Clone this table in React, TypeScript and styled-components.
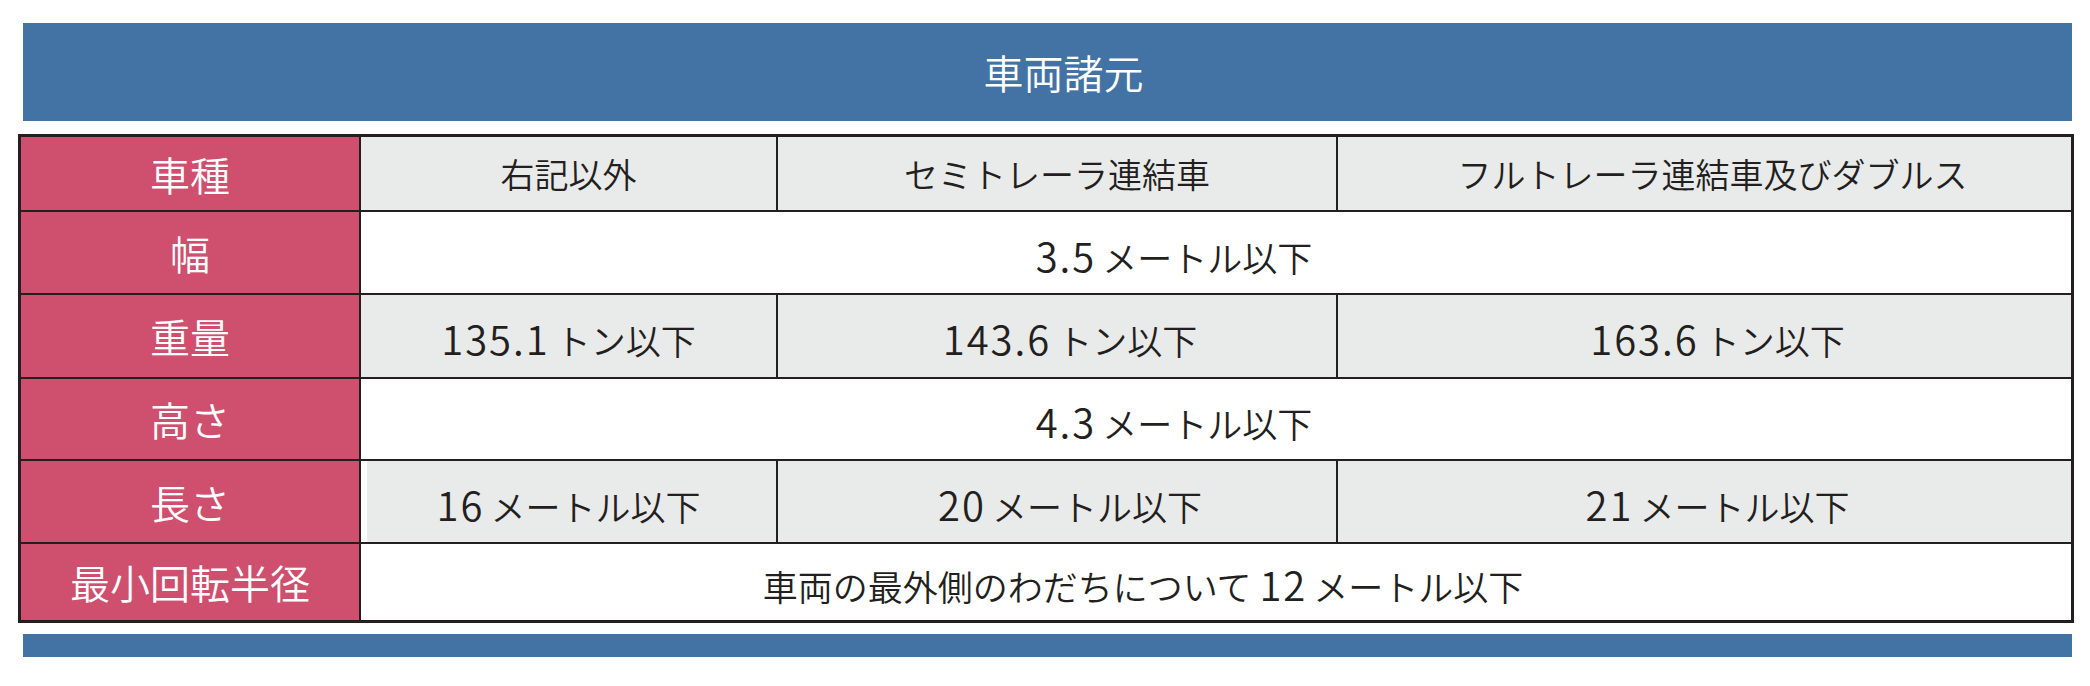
import styled, { createGlobalStyle } from "styled-components"
import { Fragment } from "react"

const GlobalStyle = createGlobalStyle`
    html, body{
        margin: 0;
        padding: 0;
        background: #ffffff;
    }
    body{
        font-family: "Noto Sans CJK JP", "Noto Sans", sans-serif;
        font-weight: 350;
        color: #231f20;
    }
`

const Page = styled.div`
    width: 2056px;
    padding: 23px 0 0 18px;
    display: flex;
    flex-direction: column;
`

const TitleBar = styled.div`
    margin: 0 2px 0 5px;
    padding-left: 32px;
    height: 98px;
    background: #4372a5;
    color: #ffffff;
    font-size: 40px;
    display: flex;
    align-items: center;
    justify-content: center;
`

const FootBar = styled.div`
    margin: 11px 2px 0 5px;
    height: 23px;
    background: #4372a5;
`

const Grid = styled.div`
    margin-top: 13px;
    display: grid;
    grid-template-columns: 338px 415px 558px 733px;
    grid-template-rows: 73px 81px 82px 80px 81px 76px;
    gap: 2px;
    background: #231f20;
    border: 3px solid #231f20;
`

const LabelCell = styled.div`
    background: #cf4f6e;
    color: #ffffff;
    font-size: 40px;
    display: flex;
    align-items: center;
    justify-content: center;
`

const HeadCell = styled.div<{ $nudge?: number }>`
    background: #e9eaea;
    font-size: 34px;
    padding-left: ${p => p.$nudge ?? 0}px;
    display: flex;
    align-items: center;
    justify-content: center;
`

type Tone = "grey" | "white"

const ValueCell = styled.div<{ $span?: number; $tone: Tone; $shift?: number; $nudge?: number; $inset?: number }>`
    grid-column: span ${p => p.$span ?? 1};
    background: ${p => (p.$tone === "grey" ? "#e9eaea" : "#ffffff")};
    box-shadow: ${p => (p.$inset ? `inset ${p.$inset}px 0 0 #ffffff` : "none")};
    font-size: 35px;
    padding: 4px ${p => p.$shift ?? 0}px 0 ${p => p.$nudge ?? 0}px;
    display: flex;
    align-items: center;
    justify-content: center;
    white-space: nowrap;
`

// digits in the source are set taller and wider than the kana around them
const Num = styled.span`
    font-size: 40px;
    letter-spacing: 2px;
    margin-right: 6px;
`

const columns = ["右記以外", "セミトレーラ連結車", "フルトレーラ連結車及びダブルス"]

interface Value {
    pre?: string
    num: string
    unit: string
}

interface SpecRow {
    label: string
    values: Value[]
    shift?: number
    inset?: number
}

const rows: SpecRow[] = [
    { label: "幅", values: [{ num: "3.5", unit: "メートル以下" }], shift: 84 },
    {
        label: "重量",
        values: [
            { num: "135.1", unit: "トン以下" },
            { num: "143.6", unit: "トン以下" },
            { num: "163.6", unit: "トン以下" },
        ],
    },
    { label: "高さ", values: [{ num: "4.3", unit: "メートル以下" }], shift: 84 },
    {
        label: "長さ",
        values: [
            { num: "16", unit: "メートル以下" },
            { num: "20", unit: "メートル以下" },
            { num: "21", unit: "メートル以下" },
        ],
        inset: 6,
    },
    { label: "最小回転半径", values: [{ pre: "車両の最外側のわだちについて ", num: "12", unit: "メートル以下" }], shift: 146 },
]

const Text: React.FC<{ v: Value }> = ({ v }) => (
    <span>
        {v.pre}
        <Num>{v.num}</Num>
        {v.unit}
    </span>
)

const App: React.FC = () => {
    return (
        <>
            <GlobalStyle />
            <Page>
                <TitleBar>車両諸元</TitleBar>
                <Grid>
                    <LabelCell>車種</LabelCell>
                    {columns.map((col, i) => (
                        <HeadCell key={col} $nudge={i === 2 ? 16 : 0}>{col}</HeadCell>
                    ))}

                    {rows.map(row => (
                        <Fragment key={row.label}>
                            <LabelCell>{row.label}</LabelCell>
                            {row.values.length === 1 ? (
                                <ValueCell $span={3} $tone="white" $shift={row.shift}>
                                    <Text v={row.values[0]} />
                                </ValueCell>
                            ) : (
                                row.values.map((v, i) => (
                                    <ValueCell key={v.num} $tone="grey" $inset={i === 0 ? row.inset : 0} $nudge={i === 0 ? 0 : 26}>
                                        <Text v={v} />
                                    </ValueCell>
                                ))
                            )}
                        </Fragment>
                    ))}
                </Grid>
                <FootBar />
            </Page>
        </>
    )
}

export default App
